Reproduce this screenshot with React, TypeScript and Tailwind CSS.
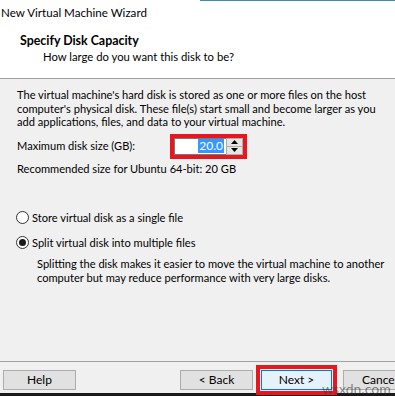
import React from "react";

function Radio({ checked }: { checked?: boolean }) {
  return (
    <span className="w-[13px] h-[13px] rounded-full border border-[#333333] bg-white flex items-center justify-center shrink-0">
      {checked && <span className="w-[7px] h-[7px] rounded-full bg-[#1a1a1a]" />}
    </span>
  );
}

export default function App() {
  return (
    <div
      className="w-[395px] h-[396px] bg-[#f0f0f0] flex flex-col text-[11.1px] text-[#000] overflow-hidden relative whitespace-nowrap"
      style={{ fontFamily: 'Lato, "Noto Sans", sans-serif' }}
    >
      {/* Header */}
      <div className="h-[79px] bg-white border-b border-[#a0a0a0] flex flex-col shrink-0">
        <div className="h-px flex">
          <div className="w-[200px]" />
          <div className="flex-1 bg-[#3d8ea8]" />
        </div>
        <div className="pl-[1px] mt-[4px] leading-[16px] text-[11.6px]">New Virtual Machine Wizard</div>
        <div className="pl-[20px] mt-[12px] leading-[16px] font-bold text-[12.4px]">Specify Disk Capacity</div>
        <div className="pl-[43px] mt-[1px] leading-[14px] text-[11.3px]">How large do you want this disk to be?</div>
      </div>

      {/* Body */}
      <div className="flex flex-col pl-[17px] pt-[9px]">
        <div className="leading-[13.5px]">
          The virtual machine's hard disk is stored as one or more files on the host
          <br />
          computer's physical disk. These file(s) start small and become larger as you
          <br />
          add applications, files, and data to your virtual machine.
        </div>

        <div className="flex items-center mt-[5px]">
          <div className="w-[153px]">Maximum disk size (GB):</div>
          <div className="border-[4px] border-[#e5171f] w-[77px] h-[25px] flex items-center">
            <div className="flex-1 h-full bg-white border border-[#7a7a7a] border-r-0 flex items-center justify-end pr-[2px]">
              <span className="bg-[#3399ff] text-white leading-[14px] px-[1px] text-[12px]">20.0</span>
            </div>
            <div className="w-[17px] h-full flex flex-col bg-[#f0f0f0] border border-[#adadad]">
              <div className="flex-1 flex items-center justify-center border-b border-[#adadad] bg-[#e5e5e5]">
                <svg width="7" height="4" viewBox="0 0 7 4"><path d="M3.5 0 L7 4 L0 4 Z" fill="#000" /></svg>
              </div>
              <div className="flex-1 flex items-center justify-center bg-[#e5e5e5]">
                <svg width="7" height="4" viewBox="0 0 7 4"><path d="M0 0 L7 0 L3.5 4 Z" fill="#000" /></svg>
              </div>
            </div>
          </div>
        </div>

        <div className="mt-[3px] leading-[14px]">Recommended size for Ubuntu 64-bit: 20 GB</div>

        <div className="flex items-center gap-[3px] mt-[35px] leading-[14px] -ml-[1px]">
          <Radio />
          <span>Store virtual disk as a single file</span>
        </div>
        <div className="flex items-center gap-[3px] mt-[11px] leading-[14px] -ml-[1px]">
          <Radio checked />
          <span>Split virtual disk into multiple files</span>
        </div>
        <div className="pl-[20px] mt-[7px] leading-[14.5px]">
          Splitting the disk makes it easier to move the virtual machine to another
          <br />
          computer but may reduce performance with very large disks.
        </div>
      </div>

      <div className="flex-1" />

      {/* Footer */}
      <div className="border-t border-[#a0a0a0] shrink-0 h-[32px] flex items-start pt-[3px] relative text-[12px]">
        <button className="ml-[3px] mt-[5px] w-[73px] h-[20px] bg-[#e1e1e1] border border-[#adadad] leading-[18px] shrink-0">
          Help
        </button>
        <button className="ml-[104px] mt-[5px] w-[73px] h-[20px] bg-[#e1e1e1] border border-[#adadad] leading-[18px] shrink-0">
          &lt; Back
        </button>
        <div className="ml-[3px] w-[81px] h-[30px] border-[4px] border-[#e5171f] flex items-center justify-center shrink-0">
          <div className="w-[71px] h-[20px] bg-[#e5f1fb] border border-[#0078d7] text-center leading-[18px]">
            Next &gt;
          </div>
        </div>
        <button className="ml-[6px] mt-[5px] w-[73px] h-[20px] bg-[#e1e1e1] border border-[#adadad] leading-[18px] text-left pl-[18px] shrink-0">
          Cancel
        </button>
        <span className="absolute left-[322px] top-[16px] text-[14px] text-[#3a3a3a]/60">wsxdn.com</span>
      </div>
      <div className="h-[3px] bg-[#1a1a1a] shrink-0" />
    </div>
  );
}
